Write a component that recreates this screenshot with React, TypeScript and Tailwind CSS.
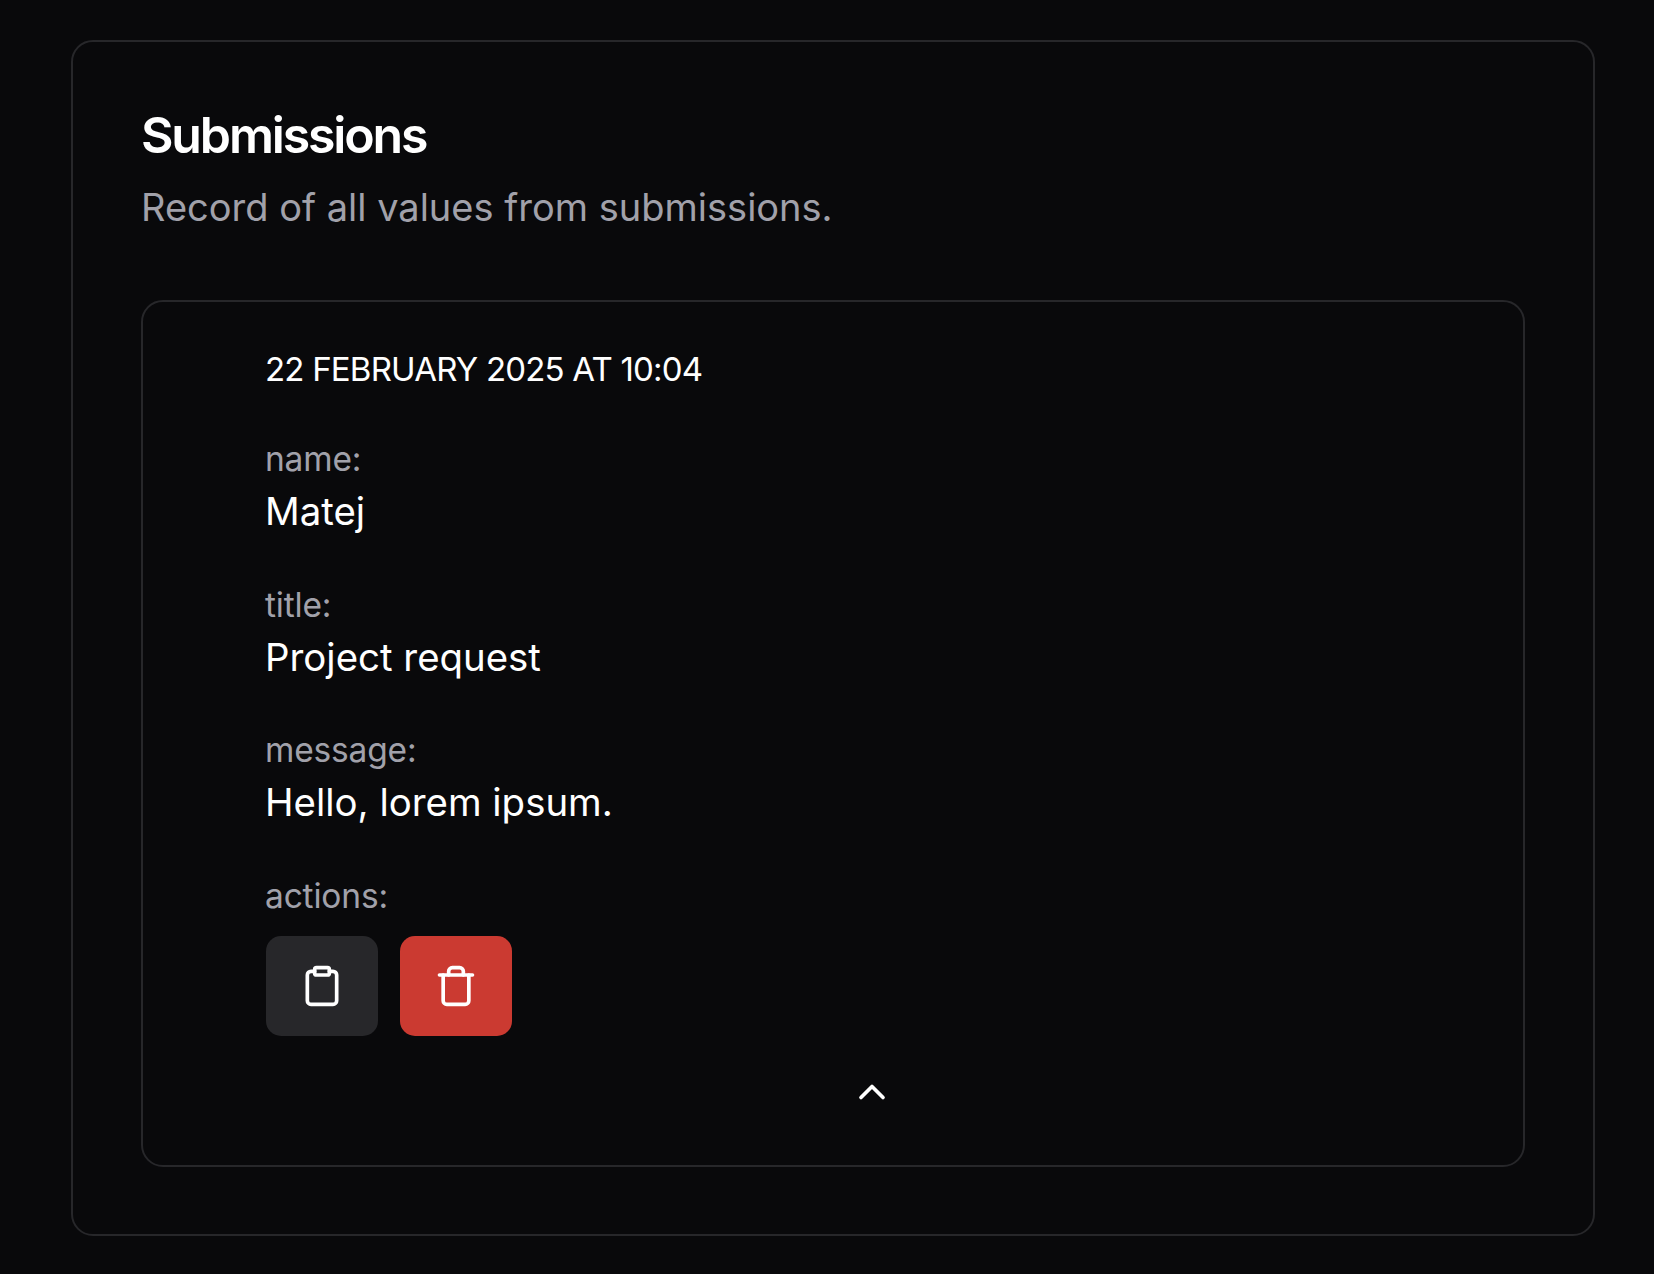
import { Clipboard, Trash, ChevronUp } from "lucide-react";

function Field({ label, value }: { label: string; value: string }) {
  return (
    <div className="flex flex-col">
      <span className="text-[33.5px] leading-[44px] tracking-[-0.005em] text-[#a1a1aa]">{label}</span>
      <span className="text-[38.4px] leading-[60px] text-white">{value}</span>
    </div>
  );
}

export default function App() {
  return (
    <div className="min-h-[1274px] bg-[#09090b] pt-[40px] pl-[71px] pr-[59px] font-['Inter',sans-serif]">
      <div className="h-[1196px] rounded-[22px] border-2 border-[#27272a] p-[68px]">
        <h1 className="mt-[-5px] text-[50px] leading-[60px] font-[640] tracking-[-2.15px] text-white">Submissions</h1>
        <p className="mt-[15px] text-[38px] leading-[54px] text-[#a1a1aa]">Record of all values from submissions.</p>
        <div className="mt-[66px] h-[867px] rounded-[22px] border-2 border-[#27272a] pl-[122px] pt-[45px] pr-[44px]">
          <div className="text-[33px] leading-[44px] tracking-[-0.8px] text-white">22 FEBRUARY 2025 AT 10:04</div>
          <div className="mt-[46px] flex flex-col gap-[41px]">
            <div className="mb-[1px]">
              <Field label="name:" value="Matej" />
            </div>
            <Field label="title:" value="Project request" />
            <Field label="message:" value="Hello, lorem ipsum." />
          </div>
          <div className="mt-[42px]">
            <span className="block text-[33.5px] leading-[44px] tracking-[-0.005em] text-[#a1a1aa]">actions:</span>
            <div className="mt-[18px] flex gap-[22px]">
              <button className="ml-[1px] flex h-[100px] w-[112px] items-center justify-center rounded-[15px] bg-[#27272a] text-white">
                <Clipboard size={44} strokeWidth={2} />
              </button>
              <button className="flex h-[100px] w-[112px] items-center justify-center rounded-[15px] bg-[#cb3a31] text-white">
                <Trash size={44} strokeWidth={2} />
              </button>
            </div>
          </div>
          <div className="mt-[34px] flex justify-center text-white">
            <ChevronUp size={44} strokeWidth={2} />
          </div>
        </div>
      </div>
    </div>
  );
}
